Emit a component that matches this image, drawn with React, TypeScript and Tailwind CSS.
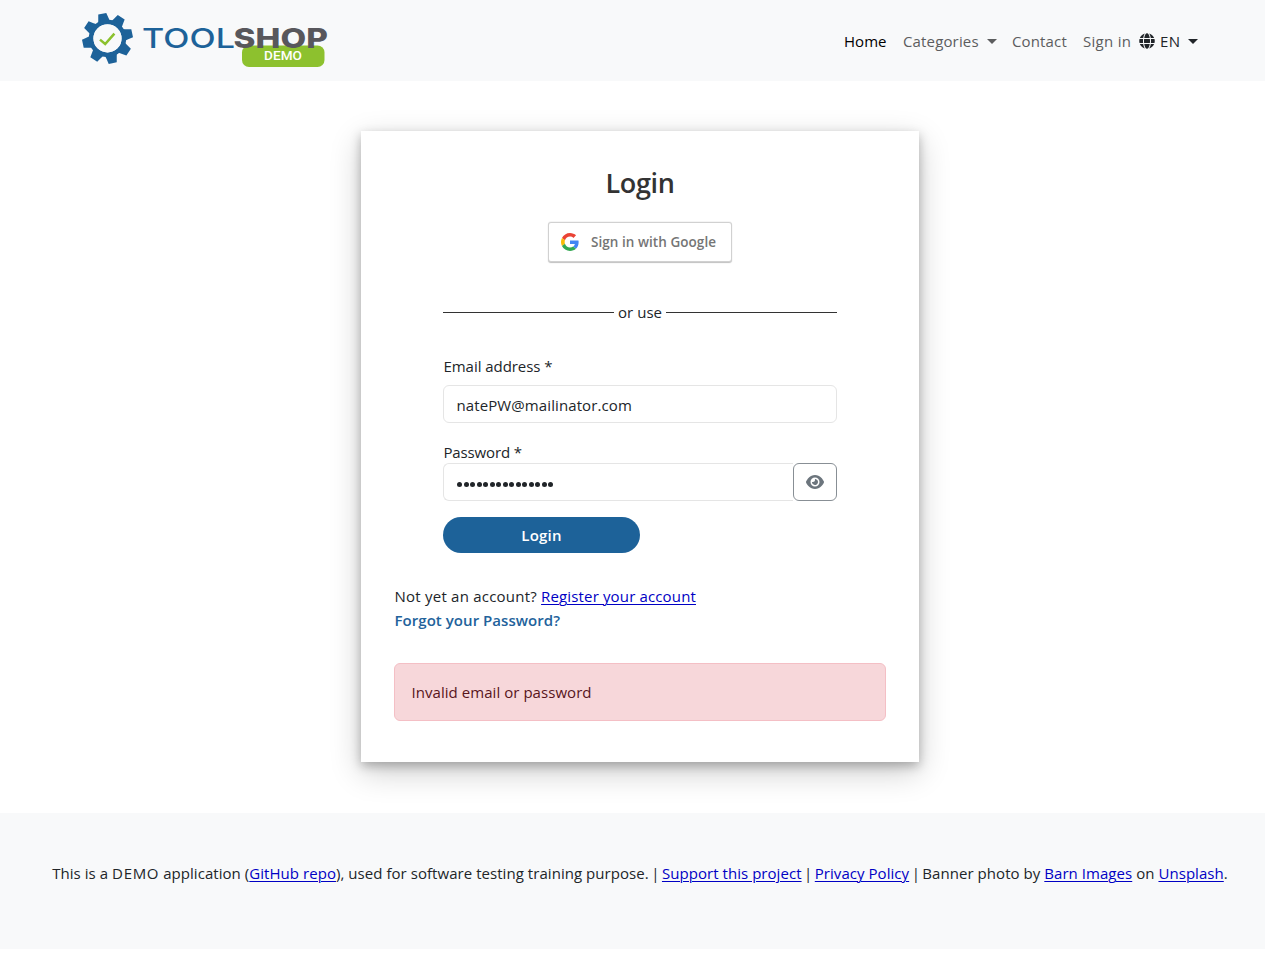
import React from "react";
import { FaGlobe } from "react-icons/fa";
import { FaEye } from "react-icons/fa6";

const TEETH = [-102, -57, -12, 33, 78, 123, 168, 213];

function Logo() {
  return (
    <svg width="250" height="60" viewBox="80 10 250 60" role="img" aria-label="Toolshop demo">
      <g fill="#1d6299">
        {TEETH.map((angle) => (
          <polygon
            key={angle}
            points="15,-6.4 20,-5.2 25.2,-4.1 25.2,4.1 20,5.2 15,6.4"
            transform={`translate(107.5 38.4) rotate(${angle})`}
          />
        ))}
      </g>
      <circle cx="107.5" cy="38.4" r="16.4" fill="none" stroke="#1d6299" strokeWidth="4.6" />
      <circle cx="107.5" cy="38.4" r="14" fill="#f8f9fa" />
      <path d="M100 39.6 L105.2 44 L114.4 33.6" fill="none" stroke="#8bc12d" strokeWidth="2.5" />
      <rect x="242" y="45.5" width="82.5" height="21.5" rx="7" fill="#8dc12e" />
      <text x="142" y="47.8" fontFamily="Inter, sans-serif" fontWeight="500" fontSize="27" fill="#1d6299" textLength="93" lengthAdjust="spacingAndGlyphs">
        TOOL
      </text>
      <text x="233.5" y="47.8" fontFamily="Inter, sans-serif" fontWeight="800" fontSize="27" fill="#58575c" textLength="94.5" lengthAdjust="spacingAndGlyphs">
        SHOP
      </text>
      <text x="264" y="60.3" fontFamily="Roboto, sans-serif" fontWeight="500" fontSize="13" fill="#ffffff" textLength="38" lengthAdjust="spacingAndGlyphs">
        DEMO
      </text>
    </svg>
  );
}

function GoogleMark() {
  return (
    <svg width="18" height="18" viewBox="0 0 48 48">
      <path fill="#EA4335" d="M24 9.5c3.54 0 6.71 1.22 9.21 3.6l6.85-6.85C35.9 2.38 30.47 0 24 0 14.62 0 6.51 5.38 2.56 13.22l7.98 6.19C12.43 13.72 17.74 9.5 24 9.5z" />
      <path fill="#4285F4" d="M46.98 24.55c0-1.57-.15-3.09-.38-4.55H24v9.02h12.94c-.58 2.96-2.26 5.48-4.78 7.18l7.73 6c4.51-4.18 7.09-10.36 7.09-17.65z" />
      <path fill="#FBBC05" d="M10.53 28.59c-.48-1.45-.76-2.99-.76-4.59s.27-3.14.76-4.59l-7.98-6.19C.92 16.46 0 20.12 0 24c0 3.88.92 7.54 2.56 10.78l7.97-6.19z" />
      <path fill="#34A853" d="M24 48c6.48 0 11.93-2.13 15.89-5.81l-7.73-6c-2.15 1.45-4.92 2.3-8.16 2.3-6.26 0-11.57-4.22-13.47-9.91l-7.98 6.19C6.51 42.62 14.62 48 24 48z" />
    </svg>
  );
}

function Caret() {
  return <span className="h-0 w-0 border-x-[5px] border-t-[5px] border-x-transparent border-t-current" />;
}

function Bar() {
  return <span className="-mx-[1.5px]">|</span>;
}

function Link({ children }: { children: React.ReactNode }) {
  return (
    <a href="#" className="text-[#0000c4] underline decoration-1 underline-offset-2">
      {children}
    </a>
  );
}

export default function App() {
  return (
    <div className="h-[973px] w-full overflow-hidden bg-white">
      <div className="w-[1280px] font-['Open_Sans','Noto_Sans',sans-serif] text-[15px] leading-6 tracking-[0.05px] text-[#212529]">
        <header className="flex h-[81px] items-start justify-between bg-[#f8f9fa] pr-[82px] pl-20">
          <div className="pt-[10px]">
            <Logo />
          </div>
          <nav className="flex items-center pt-[29px] text-[#5c5d5e]">
            <a href="#" className="w-[59px] text-black">Home</a>
            <a href="#" className="flex w-[109px] items-center">
              <span className="w-[84px] tracking-[0.15px]">Categories</span>
              <Caret />
            </a>
            <a href="#" className="w-[71px] tracking-[0.15px]">Contact</a>
            <a href="#" className="w-[56px] tracking-[0.3px]">Sign in</a>
            <a href="#" className="flex items-center text-[#212529]">
              <FaGlobe size={16} />
              <span className="ml-[5px] w-[28px] tracking-[0.3px]">EN</span>
              <Caret />
            </a>
          </nav>
        </header>

        <main className="flex h-[732px] justify-center pt-[50px]">
          <section className="h-[631px] w-[558px] bg-white px-[33px] pt-[35px] shadow-[0_4px_10px_rgba(0,0,0,0.26),0_10px_30px_rgba(0,0,0,0.2)]">
            <h1 className="text-center text-[27px] leading-[34px] font-semibold tracking-[-0.4px] text-[#333]">Login</h1>
            <div className="mt-[22px] flex justify-center">
              <button className="flex h-10 w-[184px] items-center rounded-[3px] bg-white pl-[13px] text-[13.5px] font-semibold text-[#757575] shadow-[0_-1px_0_rgba(0,0,0,0.04),0_1px_1px_rgba(0,0,0,0.25),inset_0_0_0_1px_rgba(0,0,0,0.18)]">
                <GoogleMark />
                <span className="ml-3">Sign in with Google</span>
              </button>
            </div>

            <div className="px-[49px]">
              <div className="mt-[38px] flex items-center gap-1">
                <span className="h-px flex-1 bg-[#333]" />
                <span>or use</span>
                <span className="h-px flex-1 bg-[#333]" />
              </div>
              <label className="mt-[30px] block pl-[0.5px] tracking-[-0.05px]">Email address *</label>
              <div className="mt-[7px] flex h-[38px] items-center rounded-md border border-[#e5e5e5] px-[12.5px] pt-[2px] tracking-[0.1px]">
                natePW@mailinator.com
              </div>
              <label className="mt-[18px] block pl-[0.5px] leading-[22px] tracking-[-0.15px]">Password *</label>
              <div className="flex h-[38px]">
                <div className="flex flex-1 items-center gap-[1.5px] rounded-l-md border border-r-0 border-[#e5e5e5] px-[13px] pt-1">
                  {Array.from({ length: 15 }, (_, i) => (
                    <span key={i} className="h-[5px] w-[5px] rounded-full bg-[#212529]" />
                  ))}
                </div>
                <button className="flex w-11 items-center justify-center rounded-md border border-[#888f95] text-[#6c757d]">
                  <FaEye size={18} />
                </button>
              </div>
              <button className="mt-4 h-9 w-[197px] rounded-[18px] bg-[#1d6299] font-semibold tracking-[0.2px] text-white">Login</button>
            </div>

            <p className="mt-[31px] pl-[0.5px] tracking-[0.15px]">
              <span className="tracking-[0.23px]">Not yet an account?</span> <Link>Register your account</Link>
            </p>
            <p className="pl-[0.5px] font-semibold text-[#22629b]">Forgot your Password?</p>
            <div className="mt-[31px] flex h-[58px] items-center rounded-md border border-[#f4bfc5] bg-[#f7d7da] px-[16.5px] text-[#58151c]">
              Invalid email or password
            </div>
          </section>
        </main>

        <footer className="h-[136px] bg-[#f8f9fa] pt-12 text-center whitespace-nowrap">
          This is a <span className="tracking-[0.7px]">DEMO</span> application (<Link>GitHub repo</Link>), used for
          software testing training purpose. <Bar /> <Link>Support this project</Link> <Bar />{" "}
          <Link>Privacy Policy</Link> <Bar /> Banner photo by <Link>Barn Images</Link> on <Link>Unsplash</Link>.
        </footer>
      </div>
    </div>
  );
}
